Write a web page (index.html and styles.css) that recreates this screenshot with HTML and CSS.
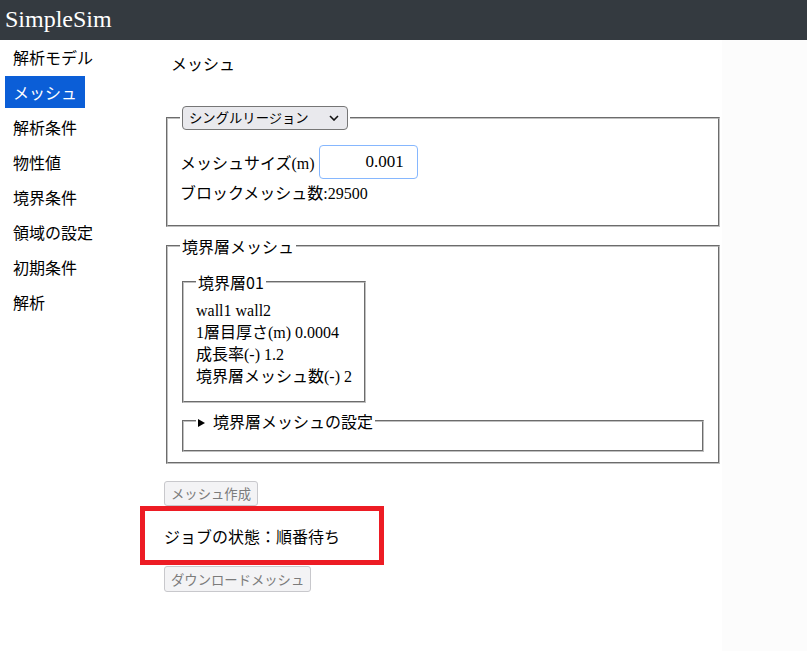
FILE: index.html
```html
<!DOCTYPE html>
<html lang="ja">
<head>
<meta charset="utf-8">
<title>SimpleSim</title>
<link rel="stylesheet" href="styles.css">
</head>
<body>
<header class="topbar">SimpleSim</header>
<div class="layout">
  <nav class="sidebar">
    <a class="nav-item">解析モデル</a>
    <a class="nav-item active">メッシュ</a>
    <a class="nav-item">解析条件</a>
    <a class="nav-item">物性値</a>
    <a class="nav-item">境界条件</a>
    <a class="nav-item">領域の設定</a>
    <a class="nav-item">初期条件</a>
    <a class="nav-item">解析</a>
  </nav>
  <main class="main">
    <div class="page-title">メッシュ</div>

    <fieldset class="fs fs-region">
      <legend class="legend-select">
        <div class="select">
          <span>シングルリージョン</span>
          <svg class="chev" width="10" height="6" viewBox="0 0 10 6"><path d="M1 1 L5 5 L9 1" fill="none" stroke="#111" stroke-width="1.6"/></svg>
        </div>
      </legend>
      <div class="size-row">
        <span>メッシュサイズ(m)</span>
        <div class="num-input">0.001</div>
      </div>
      <div class="block-count">ブロックメッシュ数:29500</div>
    </fieldset>

    <fieldset class="fs fs-layer">
      <legend>境界層メッシュ</legend>
      <fieldset class="fs fs-inner">
        <legend>境界層01</legend>
        <div class="line">wall1 wall2</div>
        <div class="line">1層目厚さ(m) 0.0004</div>
        <div class="line">成長率(-) 1.2</div>
        <div class="line">境界層メッシュ数(-) 2</div>
      </fieldset>
      <fieldset class="fs fs-details">
        <legend><span class="tri"></span>境界層メッシュの設定</legend>
      </fieldset>
    </fieldset>

    <button class="btn btn-make" disabled>メッシュ作成</button>
    <div class="status">ジョブの状態：順番待ち</div>
    <button class="btn btn-dl" disabled>ダウンロードメッシュ</button>
  </main>
</div>
</body>
</html>
```
FILE: styles.css
```css
html, body {
  margin: 0;
  padding: 0;
}
body {
  background: #fcfcfc;
  font-family: "Liberation Serif", "Noto Sans CJK JP", serif;
  font-size: 16px;
  color: #000;
}
.topbar {
  height: 40px;
  background: #343a40;
  color: #fff;
  font-family: "Liberation Serif", serif;
  font-size: 24px;
  line-height: 38px;
  padding-left: 5px;
}
.layout {
  display: flex;
  width: 722px;
  background: #fff;
  min-height: 611px;
}
.sidebar {
  width: 159px;
  padding: 1px 0 0 5px;
  display: flex;
  flex-direction: column;
  align-items: flex-start;
  gap: 3px;
}
.nav-item {
  font-family: "Noto Sans CJK JP", sans-serif;
  padding: 4px 8px;
  line-height: 24px;
  color: #000;
}
.nav-item.active {
  background: #0b5ed7;
  color: #fff;
}
.main {
  width: 558px;
}
.page-title {
  font-family: "Noto Sans CJK JP", sans-serif;
  margin: 11px 0 0 7px;
  line-height: 24px;
}
.fs {
  margin: 0 2px;
  padding: 5px 12px 10px;
  border: 2px groove #c0c0c0;
  min-width: 0;
}
.fs legend {
  padding: 0 2px;
  line-height: 24px;
  font-family: "Noto Sans CJK JP", sans-serif;
}
.fs-region {
  margin-top: 31px;
  padding-bottom: 19px;
}
.legend-select {
  line-height: normal;
}
.select {
  box-sizing: border-box;
  width: 166px;
  height: 24px;
  background: #e9e9ed;
  border: 1px solid #767676;
  border-radius: 4px;
  display: flex;
  align-items: center;
  justify-content: space-between;
  padding: 0 8px 0 6px;
  font-family: "Noto Sans CJK JP", sans-serif;
  font-size: 13.33px;
}
.chev {
  display: block;
}
.size-row {
  display: flex;
  align-items: center;
  gap: 4px;
  margin-top: 10px;
}
.num-input {
  box-sizing: border-box;
  width: 99px;
  height: 34px;
  border: 1px solid #86b7fe;
  border-radius: 4px;
  text-align: right;
  padding: 0 13px;
  line-height: 32px;
  font-size: 17px;
}
.block-count {
  margin-top: 3px;
  line-height: 24px;
}
.fs-layer {
  margin-top: 7px;
}
.fs-inner {
  width: fit-content;
  margin-top: 7px;
  padding-top: 6px;
  padding-bottom: 13px;
}
.line {
  line-height: 22px;
}
.fs-details {
  margin-top: 6px;
  padding-bottom: 12px;
}
.tri {
  display: inline-block;
  width: 0;
  height: 0;
  border-left: 7px solid #000;
  border-top: 4.5px solid transparent;
  border-bottom: 4.5px solid transparent;
  margin-right: 8px;
  vertical-align: 1px;
}
.btn {
  display: block;
  font-family: "Noto Sans CJK JP", sans-serif;
  font-size: 13.33px;
  height: 25px;
  line-height: 21px;
  padding: 0 6px;
  background: #f3f3f5;
  color: #7b7b7b;
  border: 1px solid #c8c8cc;
  border-radius: 3px;
}
.btn-make {
  margin-top: 17px;
}
.btn-dl {
  height: 26px;
}
.status {
  position: relative;
  font-family: "Noto Sans CJK JP", sans-serif;
  line-height: 23px;
  margin: 19px 0 18px;
}
.status::before {
  content: "";
  position: absolute;
  left: -24px;
  top: -19px;
  width: 244px;
  height: 59px;
  box-sizing: border-box;
  border: 5px solid #ed1c24;
}
```
